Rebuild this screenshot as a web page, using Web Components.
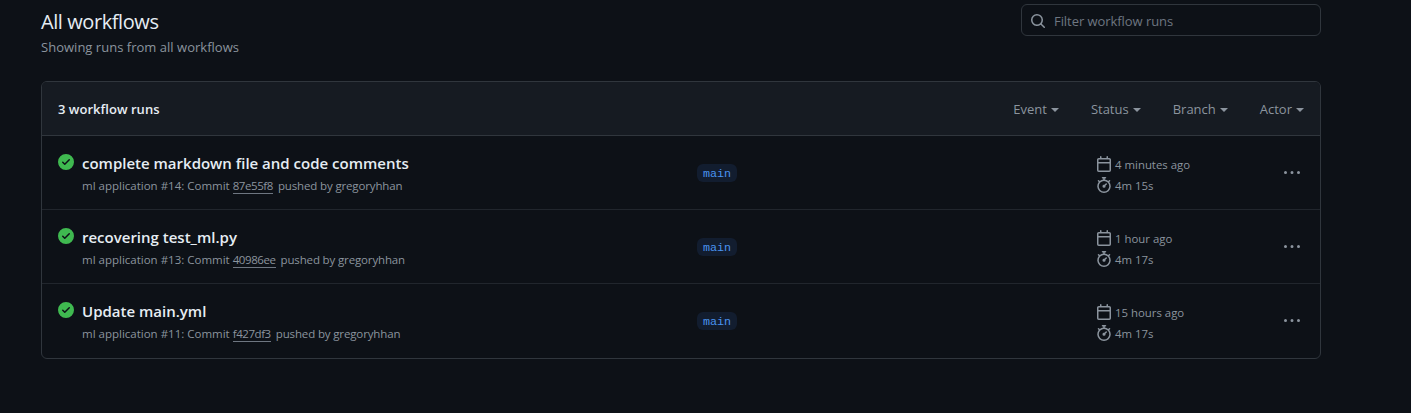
<!DOCTYPE html>
<html>
<head>
<meta charset="utf-8">
<title>All workflows</title>
<style>
  html, body { margin: 0; background: #0d1117; }
  body { color: #c9d1d9; font-family: "Open Sans", "Noto Sans", sans-serif; font-size: 14px; }
</style>
</head>
<body>
<workflows-page>
  <workflow-search slot="search" placeholder="Filter workflow runs"></workflow-search>
  <runs-box count="3 workflow runs">
    <run-row title="complete markdown file and code comments" number="ml application #14" commit="87e55f8" actor="gregoryhhan" when="4 minutes ago" took="4m 15s"></run-row>
    <run-row title="recovering test_ml.py" number="ml application #13" commit="40986ee" actor="gregoryhhan" when="1 hour ago" took="4m 17s"></run-row>
    <run-row title="Update main.yml" number="ml application #11" commit="f427df3" actor="gregoryhhan" when="15 hours ago" took="4m 17s"></run-row>
  </runs-box>
</workflows-page>

<script>
const ICONS = {
  check: "M8 16A8 8 0 1 1 8 0a8 8 0 0 1 0 16Zm3.78-9.72a.751.751 0 0 0-.018-1.042.751.751 0 0 0-1.042-.018L6.75 9.19 5.28 7.72a.751.751 0 0 0-1.042.018.751.751 0 0 0-.018 1.042l2 2a.75.75 0 0 0 1.06 0Z",
  search: "M10.68 11.74a6 6 0 0 1-7.922-8.982 6 6 0 0 1 8.982 7.922l3.04 3.04a.749.749 0 0 1-.326 1.275.749.749 0 0 1-.734-.215ZM11.5 7a4.499 4.499 0 1 0-8.997 0A4.499 4.499 0 0 0 11.5 7Z",
  calendar: "M4.75 0a.75.75 0 0 1 .75.75V2h5V.75a.75.75 0 0 1 1.5 0V2h1.25c.966 0 1.75.784 1.75 1.75v10.5A1.75 1.75 0 0 1 13.25 16H2.75A1.75 1.75 0 0 1 1 14.25V3.75C1 2.784 1.784 2 2.75 2H4V.75A.75.75 0 0 1 4.75 0ZM2.5 7.5v6.75c0 .138.112.25.25.25h10.5a.25.25 0 0 0 .25-.25V7.5Zm10.75-4H2.75a.25.25 0 0 0-.25.25V6h11V3.75a.25.25 0 0 0-.25-.25Z",
  stopwatch: "M5.75.75A.75.75 0 0 1 6.5 0h3a.75.75 0 0 1 0 1.5h-.75v1l-.001.041a6.724 6.724 0 0 1 3.464 1.435l.007-.006.75-.75a.75.75 0 1 1 1.06 1.06l-.75.75-.006.007a6.75 6.75 0 1 1-10.548 0L2.72 5.03l-.75-.75a.751.751 0 0 1 .018-1.042.751.751 0 0 1 1.042-.018l.75.75.007.006A6.72 6.72 0 0 1 7.25 2.541V1.5H6.5a.75.75 0 0 1-.75-.75ZM8 14.5a5.25 5.25 0 1 0-.001-10.501A5.25 5.25 0 0 0 8 14.5Zm.389-6.7 1.33-1.33a.75.75 0 1 1 1.061 1.06L9.45 8.861A1.503 1.503 0 0 1 8 10.75a1.499 1.499 0 1 1 .389-2.95Z",
  kebab: "M8 9a1.5 1.5 0 1 0 0-3 1.5 1.5 0 0 0 0 3ZM1.5 9a1.5 1.5 0 1 0 0-3 1.5 1.5 0 0 0 0 3Zm13 0a1.5 1.5 0 1 0 0-3 1.5 1.5 0 0 0 0 3Z"
};

function icon(name, size) {
  return `<svg width="${size}" height="${size}" viewBox="0 0 16 16" fill="currentColor" aria-hidden="true"><path d="${ICONS[name]}"></path></svg>`;
}

class WorkflowsPage extends HTMLElement {
  constructor() {
    super();
    this.shadowDOM = this.attachShadow({ mode: "open" });
    this.shadowDOM.innerHTML = `
    <style>
      :host { display: block; padding: 4px 90px 0 41px; }
      .top { display: flex; justify-content: space-between; align-items: flex-start; height: 77px; }
      h1 { margin: 4px 0 0; font-size: 20px; line-height: 27px; font-weight: 400; color: #e6edf3; letter-spacing: -.42px; }
      p { margin: 2px 0 0; font-size: 13px; line-height: 21px; color: #8b949e; letter-spacing: .02px; }
    </style>
    <div class="top">
      <div>
        <h1>All workflows</h1>
        <p>Showing runs from all workflows</p>
      </div>
      <slot name="search"></slot>
    </div>
    <slot></slot>`;
  }
}

class WorkflowSearch extends HTMLElement {
  constructor() {
    super();
    this.shadowDOM = this.attachShadow({ mode: "open" });
    this.shadowDOM.innerHTML = `
    <style>
      :host { display: flex; align-items: center; gap: 8px; box-sizing: border-box; width: 300px; height: 32px; padding: 2px 8px 0; border: 1px solid #30363d; border-radius: 6px; color: #8b949e; font-size: 13px; letter-spacing: -.06px; }
      svg { display: block; }
      span { color: #6e7681; }
    </style>
    ${icon("search", 16)}<span>${this.getAttribute("placeholder")}</span>`;
  }
}

class RunsBox extends HTMLElement {
  constructor() {
    super();
    this.shadowDOM = this.attachShadow({ mode: "open" });
    const filters = [["Event", 32], ["Status", 32], ["Branch", 32], ["Actor", 0]];
    this.shadowDOM.innerHTML = `
    <style>
      :host { display: block; border: 1px solid #30363d; border-radius: 6px; overflow: hidden; }
      header { display: flex; align-items: center; justify-content: space-between; height: 53px; padding: 0 16px; background: #161b22; border-bottom: 1px solid #30363d; }
      strong { font-size: 13px; font-weight: 600; color: #e6edf3; letter-spacing: .03px; }
      nav { display: flex; }
      nav span { display: flex; align-items: center; color: #8b949e; font-size: 13px; letter-spacing: 0; }
      i { display: block; width: 0; height: 0; margin-left: 4px; margin-top: 2px; border: 4px solid transparent; border-top-color: #8b949e; border-bottom: 0; }
    </style>
    <header>
      <strong>${this.getAttribute("count")}</strong>
      <nav>${filters.map(([name, gap]) => `<span style="margin-right:${gap}px">${name}<i></i></span>`).join("")}</nav>
    </header>
    <slot></slot>`;
  }
}

class RunRow extends HTMLElement {
  constructor() {
    super();
    this.shadowDOM = this.attachShadow({ mode: "open" });
    const a = (n) => this.getAttribute(n);
    this.shadowDOM.innerHTML = `
    <style>
      :host { display: grid; grid-template-columns: 639px 399px 1fr auto; align-items: center; box-sizing: border-box; height: 74px; padding: 0 16px; border-bottom: 1px solid #21262d; }
      :host(:last-child) { border-bottom: 0; }
      .main { display: grid; grid-template-columns: 16px 1fr; column-gap: 8px; }
      :host(:not(:last-child)) .main { margin-top: 1px; }
      .ok { color: #3fb950; margin-top: 2px; }
      .ok svg, .meta svg, .more svg { display: block; }
      .title { font-size: 15px; line-height: 22px; font-weight: 600; color: #e6edf3; letter-spacing: 0; }
      .sub { grid-column: 2; font-size: 11.5px; line-height: 18px; margin-top: 3px; color: #8b949e; }
      .sub u { text-decoration: none; border-bottom: 1px solid #6e7681; margin-right: 2px; letter-spacing: -.43px; }
      .sub span { letter-spacing: -.14px; }
      .branch { justify-self: start; height: 17px; padding: 1px 6px 0; border-radius: 6px; background: #121d2f; color: #4a94f0; font: 11.7px/18px "Liberation Mono", monospace; }
      .meta { display: grid; row-gap: 5px; padding-top: 3px; color: #8b949e; font-size: 11.4px; }
      .meta div { display: flex; align-items: center; gap: 3px; height: 16px; line-height: 16px; }
      .meta span { margin-top: 2px; }
      .more { color: #8b949e; margin-right: 4px; }
    </style>
    <div class="main">
      <span class="ok">${icon("check", 16)}</span>
      <div class="title">${a("title")}</div>
      <div class="sub">${a("number")}: Commit <u>${a("commit")}</u> <span>pushed by ${a("actor")}</span></div>
    </div>
    <span class="branch">main</span>
    <div class="meta">
      <div>${icon("calendar", 16)}<span>${a("when")}</span></div>
      <div>${icon("stopwatch", 16)}<span>${a("took")}</span></div>
    </div>
    <span class="more">${icon("kebab", 16)}</span>`;
  }
}

customElements.define("workflows-page", WorkflowsPage);
customElements.define("workflow-search", WorkflowSearch);
customElements.define("runs-box", RunsBox);
customElements.define("run-row", RunRow);
</script>
</body>
</html>
